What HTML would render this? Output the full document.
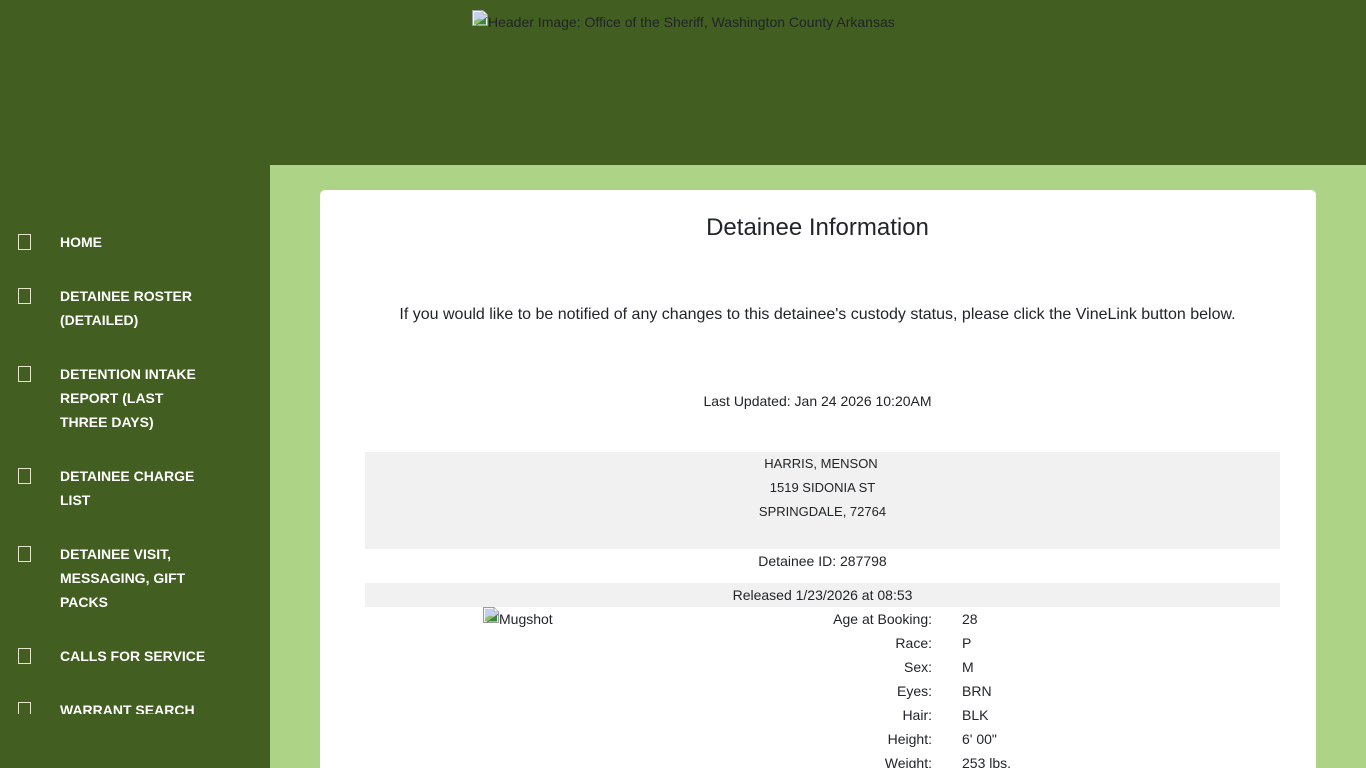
<!DOCTYPE html>
<html lang="en">
<head>
<meta charset="utf-8">
<title>Detainee Information</title>
<style>
html,body{margin:0;padding:0;width:1366px;height:768px;overflow:hidden;background:#425e20;}
body{position:relative;font-family:"Liberation Sans",Arial,sans-serif;color:#212529;font-size:14px;line-height:24px;}
.abs{position:absolute;}
.main{position:absolute;left:270px;top:165px;width:1096px;height:603px;background:#acd386;}
.card{position:absolute;left:320px;top:190px;width:996px;height:600px;background:#fff;border-radius:5px;}
.c{position:absolute;text-align:center;white-space:nowrap;}
.a{font-size:13px;}
.band{position:absolute;left:365px;width:915px;background:#f1f1f1;}
.nav{position:absolute;left:0;top:200px;width:270px;height:514px;overflow:hidden;}
.nav .box{position:absolute;left:18px;width:11px;height:14px;border:1px solid #e6e4cc;}
.nav .t{position:absolute;left:60px;width:150px;color:#fff;font-weight:700;font-size:14px;line-height:24px;}
.r{position:absolute;left:700px;width:232px;text-align:right;}
.v{position:absolute;left:962px;}
svg.bi{position:absolute;width:16px;height:16px;}
</style>
</head>
<body>
<svg class="bi" style="left:472px;top:10px" viewBox="0 0 16 16"><path d="M.5.5H11L15.5 5V15.5H.5Z" fill="#f4f6fb" stroke="#9b9b9b"/><path d="M2 2H10V6H14V9L2 11Z" fill="#c3d1f0"/><path d="M2 11L7 8.5L12 10L6 14.5H2Z" fill="#8cc06a"/><path d="M6 14.5L14 8.5V14.5Z" fill="#2f8f35"/><path d="M11 .5V5H15.5" fill="#fff" stroke="#9b9b9b"/><path d="M4 15.5L15.5 7" stroke="#5c6b55" fill="none"/></svg>
<div class="abs" style="left:488px;top:10px;white-space:nowrap;">Header Image: Office of the Sheriff, Washington County Arkansas</div>

<div class="nav">
  <div class="box" style="top:34px"></div><div class="t" style="top:30px">HOME</div>
  <div class="box" style="top:88px"></div><div class="t" style="top:84px">DETAINEE ROSTER<br>(DETAILED)</div>
  <div class="box" style="top:166px"></div><div class="t" style="top:162px">DETENTION INTAKE<br>REPORT (LAST<br>THREE DAYS)</div>
  <div class="box" style="top:268px"></div><div class="t" style="top:264px">DETAINEE CHARGE<br>LIST</div>
  <div class="box" style="top:346px"></div><div class="t" style="top:342px">DETAINEE VISIT,<br>MESSAGING, GIFT<br>PACKS</div>
  <div class="box" style="top:448px"></div><div class="t" style="top:444px">CALLS FOR SERVICE</div>
  <div class="box" style="top:502px"></div><div class="t" style="top:498px">WARRANT SEARCH</div>
</div>

<div class="main"></div>
<div class="card"></div>

<div class="c" style="left:320px;width:995px;top:213px;font-size:24px;line-height:29px;">Detainee Information</div>
<div class="c" style="left:320px;width:995px;top:303px;font-size:16px;">If you would like to be notified of any changes to this detainee's custody status, please click the VineLink button below.</div>
<div class="c" style="left:320px;width:995px;top:389px;">Last Updated: Jan 24 2026 10:20AM</div>

<div class="band" style="top:452px;height:97px;"></div>
<div class="c a" style="left:365px;width:912px;top:452px;">HARRIS, MENSON</div>
<div class="c a" style="left:365px;width:915px;top:476px;">1519 SIDONIA ST</div>
<div class="c a" style="left:365px;width:915px;top:500px;">SPRINGDALE, 72764</div>

<div class="c" style="left:365px;width:915px;top:549px;">Detainee ID: 287798</div>

<div class="band" style="top:583px;height:24px;"></div>
<div class="c" style="left:365px;width:915px;top:583px;">Released 1/23/2026 at 08:53</div>

<svg class="bi" style="left:483px;top:607px" viewBox="0 0 16 16"><path d="M.5.5H11L15.5 5V15.5H.5Z" fill="#f4f6fb" stroke="#9b9b9b"/><path d="M2 2H10V6H14V9L2 11Z" fill="#c3d1f0"/><path d="M2 11L7 8.5L12 10L6 14.5H2Z" fill="#8cc06a"/><path d="M6 14.5L14 8.5V14.5Z" fill="#2f8f35"/><path d="M11 .5V5H15.5" fill="#fff" stroke="#9b9b9b"/><path d="M4 15.5L15.5 7" stroke="#5c6b55" fill="none"/></svg>
<div class="abs" style="left:499px;top:607px;">Mugshot</div>

<div class="r" style="top:607px">Age at Booking:</div><div class="v" style="top:607px">28</div>
<div class="r" style="top:631px">Race:</div><div class="v" style="top:631px">P</div>
<div class="r" style="top:655px">Sex:</div><div class="v" style="top:655px">M</div>
<div class="r" style="top:679px">Eyes:</div><div class="v" style="top:679px">BRN</div>
<div class="r" style="top:703px">Hair:</div><div class="v" style="top:703px">BLK</div>
<div class="r" style="top:727px">Height:</div><div class="v" style="top:727px">6' 00"</div>
<div class="r" style="top:751px">Weight:</div><div class="v" style="top:751px">253 lbs.</div>
</body>
</html>
